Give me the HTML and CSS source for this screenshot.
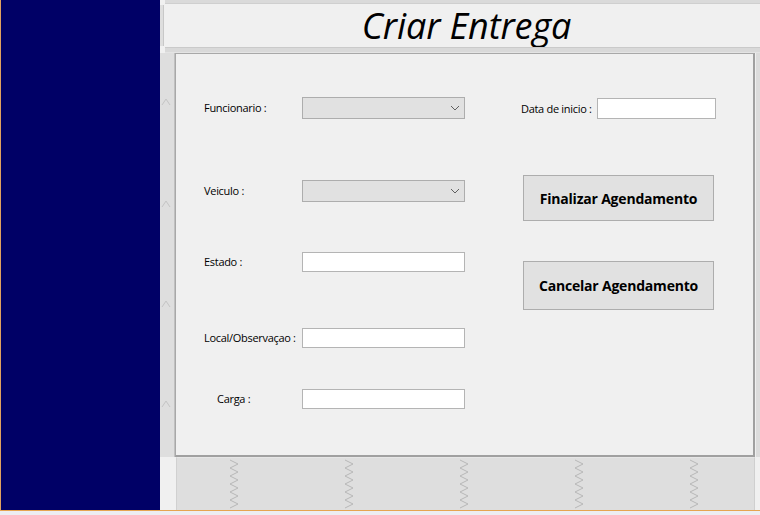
FILE: index.html
```html
<!DOCTYPE html>
<html lang="pt">
<head>
<meta charset="utf-8">
<title>Criar Entrega</title>
<link rel="stylesheet" href="styles.css">
</head>
<body>
<div class="window">
  <aside class="nav"></aside>
  <main class="content">
    <div class="topbar"></div>
    <header class="header">
      <div class="header-grip"></div>
      <h1 class="title">Criar Entrega</h1>
    </header>
    <div class="hbar"></div>
    <div class="mid">
      <div class="lstrip">
        <svg class="caret c1" width="10" height="8" viewBox="0 0 10 8"><polyline points="1,7 5,1 9,7" fill="none" stroke="#c4c4c4" stroke-width="1"/></svg>
        <svg class="caret c2" width="10" height="8" viewBox="0 0 10 8"><polyline points="1,7 5,1 9,7" fill="none" stroke="#c4c4c4" stroke-width="1"/></svg>
        <svg class="caret c3" width="10" height="8" viewBox="0 0 10 8"><polyline points="1,7 5,1 9,7" fill="none" stroke="#c4c4c4" stroke-width="1"/></svg>
        <svg class="caret c4" width="10" height="8" viewBox="0 0 10 8"><polyline points="1,7 5,1 9,7" fill="none" stroke="#c4c4c4" stroke-width="1"/></svg>
      </div>
      <section class="panel">
        <div class="col-left">
          <div class="row r1">
            <span class="label">Funcionario :</span>
            <div class="combo"><svg width="10" height="6" viewBox="0 0 10 6"><polyline points="1,1 5,5 9,1" fill="none" stroke="#606060" stroke-width="1"/></svg></div>
          </div>
          <div class="row r2">
            <span class="label">Veiculo :</span>
            <div class="combo"><svg width="10" height="6" viewBox="0 0 10 6"><polyline points="1,1 5,5 9,1" fill="none" stroke="#606060" stroke-width="1"/></svg></div>
          </div>
          <div class="row r3">
            <span class="label">Estado :</span>
            <div class="textbox"></div>
          </div>
          <div class="row r4">
            <span class="label">Local/Observaçao :</span>
            <div class="textbox"></div>
          </div>
          <div class="row r5">
            <span class="label indent">Carga :</span>
            <div class="textbox"></div>
          </div>
        </div>
        <div class="col-right">
          <div class="row-date">
            <span class="label-date">Data de inicio :</span>
            <div class="textbox date"></div>
          </div>
          <button class="btn b1">Finalizar Agendamento</button>
          <button class="btn b2">Cancelar Agendamento</button>
        </div>
      </section>
      <div class="rstrip"></div>
    </div>
    <div class="bottom">
      <div class="bl"></div>
      <div class="tray">
        <svg class="zig" width="10" height="50" viewBox="0 0 10 50"><polyline points="1,1 9,5 1,9 9,13 1,17 9,21 1,25 9,29 1,33 9,37 1,41 9,45 1,49" fill="none" stroke="#b8b8b8" stroke-width="1"/></svg>
        <svg class="zig" width="10" height="50" viewBox="0 0 10 50"><polyline points="1,1 9,5 1,9 9,13 1,17 9,21 1,25 9,29 1,33 9,37 1,41 9,45 1,49" fill="none" stroke="#b8b8b8" stroke-width="1"/></svg>
        <svg class="zig" width="10" height="50" viewBox="0 0 10 50"><polyline points="1,1 9,5 1,9 9,13 1,17 9,21 1,25 9,29 1,33 9,37 1,41 9,45 1,49" fill="none" stroke="#b8b8b8" stroke-width="1"/></svg>
        <svg class="zig" width="10" height="50" viewBox="0 0 10 50"><polyline points="1,1 9,5 1,9 9,13 1,17 9,21 1,25 9,29 1,33 9,37 1,41 9,45 1,49" fill="none" stroke="#b8b8b8" stroke-width="1"/></svg>
        <svg class="zig" width="10" height="50" viewBox="0 0 10 50"><polyline points="1,1 9,5 1,9 9,13 1,17 9,21 1,25 9,29 1,33 9,37 1,41 9,45 1,49" fill="none" stroke="#b8b8b8" stroke-width="1"/></svg>
      </div>
      <div class="br"></div>
    </div>
  </main>
</div>
<div class="footer-line"></div>
</body>
</html>
```
FILE: styles.css
```css
* { box-sizing: border-box; }
html, body {
  margin: 0;
  padding: 0;
  width: 760px;
  height: 515px;
  overflow: hidden;
  background: #ededf2;
  font-family: "Open Sans", "Noto Sans", sans-serif;
}
.window {
  display: flex;
  width: 760px;
  height: 510px;
  border-left: 1px solid #e0a060;
}
.footer-line {
  height: 1px;
  background: #e6a450;
  width: 760px;
}
.nav {
  width: 159px;
  flex: none;
  background: #000066;
}
.content {
  flex: 1;
  display: flex;
  flex-direction: column;
  background: #f0f0f0;
}
.topbar {
  height: 4px;
  margin-left: 5px;
  background: #dadada;
  border-bottom: 1px solid #cfcfcf;
}
.header {
  height: 43px;
  display: flex;
  align-items: center;
}
.header-grip {
  width: 4px;
  align-self: stretch;
  margin: 1px 0 1px 0;
  background: #dedede;
  border-right: 1px solid #c8c8c8;
}
.title {
  margin: 0;
  flex: 1;
  text-align: center;
  padding-left: 9px;
  font-family: "Open Sans", sans-serif;
  font-style: italic;
  font-weight: 400;
  font-size: 36px;
  letter-spacing: -0.1px;
  color: #000;
  line-height: 44px;
}
.hbar {
  height: 6px;
  margin-left: 5px;
  background: #d9d9d9;
  border-top: 1px solid #cacaca;
  border-bottom: 1px solid #e4e4e4;
}
.mid {
  display: flex;
  height: 404px;
}
.lstrip {
  width: 15px;
  flex: none;
  background: #dedede;
  border-right: 1px solid #c0c0c0;
  display: flex;
  flex-direction: column;
  align-items: center;
  padding-right: 2px;
}
.caret { display: block; }
.c1 { margin-top: 45px; }
.c2 { margin-top: 94px; }
.c3 { margin-top: 92px; }
.c4 { margin-top: 92px; }
.panel {
  width: 580px;
  flex: none;
  background: #f0f0f0;
  border: 1px solid #a8a8a8;
  border-right: 2px solid #a0a0a0;
  border-bottom: 2px solid #a0a0a0;
  display: flex;
  padding-left: 28px;
  font-size: 11px;
  color: #000;
}
.rstrip {
  flex: 1;
  background: #dcdcdc;
  border-left: 1px solid #efefef;
}
.col-left {
  width: 262px;
  display: flex;
  flex-direction: column;
}
.row {
  display: flex;
  align-items: center;
}
.r1 { margin-top: 43px; }
.r2 { margin-top: 61px; }
.r3 { margin-top: 50px; }
.r4 { margin-top: 56px; }
.r5 { margin-top: 41px; }
.label {
  width: 98px;
  flex: none;
  white-space: nowrap;
  letter-spacing: -0.3px;
  margin-top: -1px;
}
.label.indent { padding-left: 13px; }
.combo {
  width: 163px;
  height: 22px;
  background: #e1e1e1;
  border: 1px solid #adadad;
  display: flex;
  align-items: center;
  justify-content: flex-end;
  padding-right: 4px;
}
.combo svg { display: block; }
.textbox {
  width: 163px;
  height: 20px;
  background: #fff;
  border: 1px solid #b4b4b4;
}
.col-right {
  margin-left: 55px;
  display: flex;
  flex-direction: column;
  align-items: flex-start;
}
.row-date {
  margin-top: 44px;
  display: flex;
  align-items: center;
}
.label-date {
  width: 76px;
  white-space: nowrap;
  letter-spacing: -0.3px;
  margin-top: -1px;
}
.textbox.date {
  width: 119px;
  height: 21px;
}
.btn {
  margin-left: 2px;
  width: 191px;
  background: #e1e1e1;
  border: 1px solid #adadad;
  font-family: "Open Sans", sans-serif;
  font-weight: 700;
  font-size: 14px;
  letter-spacing: -0.2px;
  color: #000;
  padding: 0;
}
.b1 { margin-top: 56px; height: 46px; }
.b2 { margin-top: 40px; height: 49px; }
.bottom {
  display: flex;
  flex: 1;
}
.bl {
  width: 16px;
  flex: none;
  background: #f0f0f0;
}
.tray {
  width: 579px;
  flex: none;
  background: #dedede;
  border-left: 1px solid #d0d0d0;
  border-right: 1px solid #cfcfcf;
  border-top: 1px solid #e6e6e6;
  display: flex;
  padding-left: 52px;
  gap: 105px;
  align-items: center;
}
.zig { display: block; }
.br {
  flex: 1;
  background: #f0f0f0;
}
```
